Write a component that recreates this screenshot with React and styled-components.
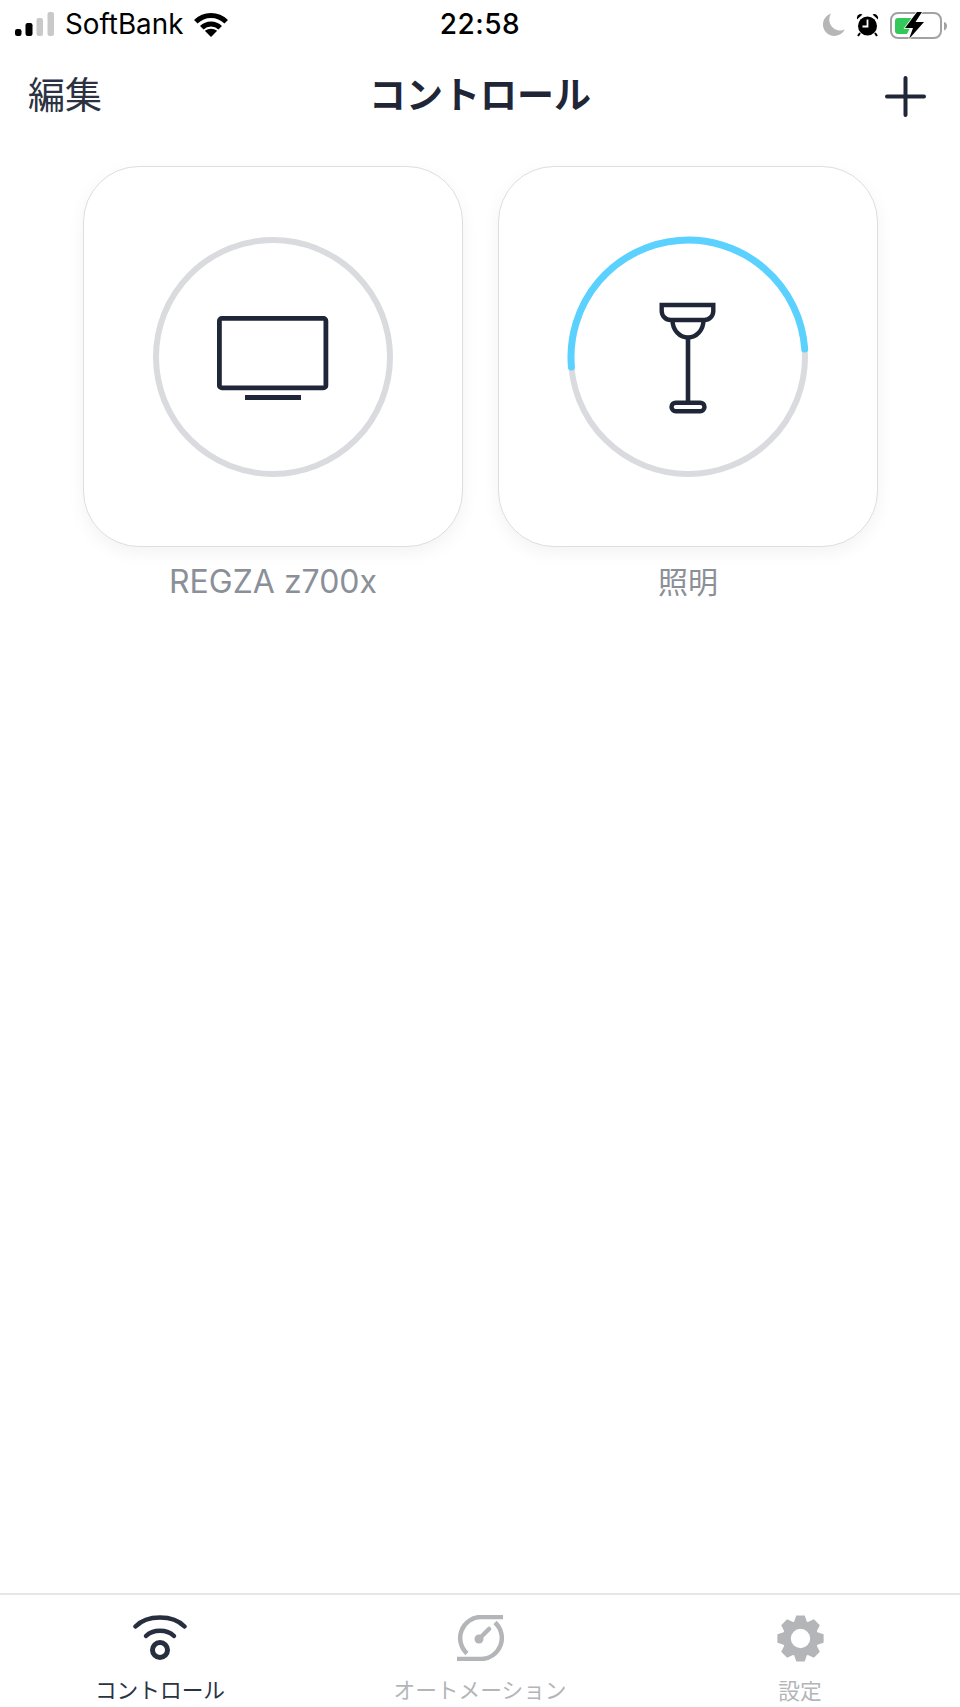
import React from 'react';
import styled, { createGlobalStyle } from 'styled-components';

const GlobalStyle = createGlobalStyle`
html, body {
	margin: 0;
	padding: 0;
	background-color: #fff;
}
* {
	box-sizing: border-box;
}
`;

const SANS = `Inter, "Noto Sans CJK JP", "Noto Sans", sans-serif`;
const INK = '#1f2637';

const Page = styled.div`
display: flex;
flex-flow: column nowrap;
width: 960px;
height: 1707px;
background-color: #fff;
font-family: ${SANS};
color: ${INK};
overflow: hidden;
`;

const StatusBar = styled.div`
display: grid;
grid-template-columns: 1fr auto 1fr;
align-items: center;
flex-shrink: 0;
height: 48px;
padding: 1px 15px 0;
color: #000;
`;

const StatusLeft = styled.div`
display: flex;
align-items: center;
gap: 10px;
`;

const Carrier = styled.span`
font-size: 27.8px;
line-height: 47px;
`;

const Clock = styled.span`
font-size: 28px;
font-weight: 500;
line-height: 47px;
letter-spacing: 0.5px;
`;

const StatusRight = styled.div`
display: flex;
align-items: center;
justify-content: flex-end;
gap: 11px;
margin-right: -3px;
`;

const NavBar = styled.div`
display: grid;
grid-template-columns: 1fr auto 1fr;
align-items: center;
flex-shrink: 0;
height: 90px;
padding: 0 28px;
`;

const EditButton = styled.span`
font-size: 37px;
color: #2b3242;
`;

const Title = styled.h1`
margin: 0;
font-size: 37px;
font-weight: 700;
color: ${INK};
`;

const AddButton = styled.div`
display: flex;
justify-content: flex-end;
padding: 6px 6px 0 0;
`;

const DeviceGrid = styled.div`
display: grid;
grid-template-columns: 380px 380px;
gap: 35px;
flex-grow: 1;
align-content: start;
padding: 28px 83px 0;
`;

const Device = styled.div`
display: flex;
flex-flow: column nowrap;
align-items: center;
`;

const DeviceCard = styled.div`
display: grid;
place-items: center;
width: 380px;
height: 381px;
padding-top: 1px;
background-color: #fff;
border: 1px solid #dedee1;
border-radius: 56px;
box-shadow: 0 6px 18px rgba(0, 0, 0, 0.05);
& > svg {
	grid-area: 1 / 1;
}
`;

const DeviceName = styled.span`
margin-top: 16px;
font-size: ${(props) => props.$size || 30}px;
line-height: 38px;
color: #8b9098;
`;

const TabBar = styled.div`
display: grid;
grid-template-columns: repeat(3, 320px);
flex-shrink: 0;
height: 114px;
border-top: 2px solid #e6e6e8;
`;

const Tab = styled.div`
display: flex;
flex-flow: column nowrap;
align-items: center;
padding-top: 20px;
color: ${(props) => (props.$active ? '#2b3242' : '#b4b5b9')};
`;

const TabLabel = styled.span`
margin-top: 14px;
font-size: 21.7px;
line-height: 30px;
white-space: nowrap;
`;

const SignalIcon = () => (
	<svg width="40" height="26" viewBox="0 0 40 26">
		<rect x="0" y="17" width="6.5" height="7" rx="2.2" fill="#000" />
		<rect x="10.5" y="11" width="7" height="13" rx="2.2" fill="#000" />
		<rect x="21.5" y="6" width="6.5" height="18" rx="2.2" fill="#c9c9c9" />
		<rect x="32.5" y="0" width="6.5" height="24" rx="2.2" fill="#c9c9c9" />
	</svg>
);

const WifiStatusIcon = () => (
	<svg width="36" height="26" viewBox="0 0 36 26" fill="none">
		<path d="M2.8 9.8A21.5 21.5 0 0 1 33.2 9.8" stroke="#000" strokeWidth="5" />
		<path d="M8.8 15.8A13 13 0 0 1 27.2 15.8" stroke="#000" strokeWidth="5" />
		<path d="M18 25L11.8 18.8Q18 14.6 24.2 18.8Z" fill="#000" />
	</svg>
);

const MoonIcon = () => (
	<svg width="22" height="23" viewBox="0 0 22 23">
		<path d="M8 0.5A11.5 11.5 0 1 0 21.8 16.5A11 11 0 0 1 8 0.5Z" fill="#b6b6b6" />
	</svg>
);

const AlarmIcon = () => (
	<svg width="23" height="24" viewBox="0 0 23 24">
		<circle cx="11.5" cy="13" r="9.5" fill="#000" />
		<path d="M1 6.5A4 4 0 0 1 6.5 1.5Z" fill="#000" />
		<path d="M22 6.5A4 4 0 0 0 16.5 1.5Z" fill="#000" />
		<path d="M4 20L2 23M19 20L21 23" stroke="#000" strokeWidth="2" />
		<path d="M11.5 6.5V13.5H6.5" stroke="#fff" strokeWidth="1.8" fill="none" />
	</svg>
);

const BatteryIcon = () => (
	<svg width="58" height="28" viewBox="0 0 58 28">
		<rect x="1" y="2" width="50" height="25" rx="7" fill="none" stroke="#a2a2a2" strokeWidth="2" />
		<path d="M54 11C56 11.5 57 13 57 15S56 18.500 54 19.500Z" fill="#a2a2a2" />
		<path d="M8 7H25L17 23H8A3 3 0 0 1 5 20V10A3 3 0 0 1 8 7Z" fill="#34c759" />
		<path d="M27 1L15 17H23L19 28L34 11H25.500L32 1Z" fill="#000" stroke="#fff" strokeWidth="1.5" paintOrder="stroke" />
	</svg>
);

const PlusIcon = () => (
	<svg width="41" height="41" viewBox="0 0 41 41" fill="none" stroke={INK} strokeWidth="4" strokeLinecap="round">
		<path d="M20.500 2V39M2 20.500H39" />
	</svg>
);

// grey ring, with the blue arc on top when the device is switched on
const Ring = ({ lit }) => (
	<svg width="244" height="244" viewBox="0 0 244 244" fill="none">
		<circle cx="122" cy="122" r="117" stroke="#dadbdf" strokeWidth="6" />
		{lit && <path d="M5.400 132A117 117 0 1 1 238.700 114" stroke="#5ad1ff" strokeWidth="7" strokeLinecap="round" />}
	</svg>
);

const TvIcon = () => (
	<svg width="112" height="90" viewBox="0 -4 112 90" fill="none" stroke={INK}>
		<rect x="2.400" y="2.400" width="106.500" height="69.500" rx="2.500" strokeWidth="4.800" />
		<path d="M28 81.500H84" strokeWidth="4.800" />
	</svg>
);

const LampIcon = () => (
	<svg width="60" height="118" viewBox="0 -2 60 118" fill="none" stroke={INK} strokeWidth="4.400">
		<path d="M3.700 5H55.300V11A9 9 0 0 1 46.300 20H12.700A9 9 0 0 1 3.700 11Z" />
		<path d="M14.500 20C14.500 30 21.500 37.500 30 37.500C38.500 37.500 45.500 30 45.500 20" />
		<path d="M30 37V102" strokeWidth="4.600" />
		<rect x="13.500" y="102.700" width="33" height="8.500" rx="4.200" />
	</svg>
);

const ControlIcon = () => (
	<svg width="54" height="46" viewBox="0 0 54 46" fill="none" stroke="#272e3e" strokeLinecap="round">
		<path d="M2.500 11.500C14 -0.500 40 -0.500 51.500 11.500" strokeWidth="4.500" />
		<path d="M13 21C20 14 34 14 41 21" strokeWidth="4.500" />
		<circle cx="27" cy="35" r="7.500" strokeWidth="5" />
	</svg>
);

const AutomationIcon = () => (
	<svg width="48" height="46" viewBox="0 0 48 46" fill="none" stroke="#b4b5b9">
		<path d="M47 2H25A21 21 0 0 0 11 38.500" strokeWidth="4.500" />
		<path d="M1 44H25A21 21 0 0 0 39 7.500" strokeWidth="4.500" />
		<circle cx="23" cy="24" r="4.500" fill="#b4b5b9" stroke="none" />
		<path d="M23 24L33 14" strokeWidth="4.500" strokeLinecap="round" />
	</svg>
);

// gear outline worked out once, 8 teeth with one pointing straight up
const gearPath = () => {
	const pts = [];
	for (let i = 0; i < 8; i++) {
		const a = (i * Math.PI) / 4 - Math.PI / 2;
		[[-0.36, 18], [-0.18, 23.5], [0.18, 23.5], [0.36, 18]].forEach(([d, r]) => {
			pts.push(`${(24.5 + r * Math.cos(a + d)).toFixed(2)} ${(23.500 + r * Math.sin(a + d)).toFixed(2)}`);
		});
	}
	return `M${pts.join('L')}Z`;
};

const SettingsIcon = () => (
	<svg width="48" height="47" viewBox="0 0 48 47">
		<path
			d={`${gearPath()}M24.500 13.800A9.700 9.700 0 1 0 24.500 33.200A9.700 9.700 0 1 0 24.500 13.800Z`}
			fill="#b4b5b9"
			fillRule="evenodd"
		/>
	</svg>
);

const App = () => {
	return (
		<Page>
			<GlobalStyle />
			<StatusBar>
				<StatusLeft>
					<SignalIcon />
					<Carrier>SoftBank</Carrier>
					<WifiStatusIcon />
				</StatusLeft>
				<Clock>22:58</Clock>
				<StatusRight>
					<MoonIcon />
					<AlarmIcon />
					<BatteryIcon />
				</StatusRight>
			</StatusBar>
			<NavBar>
				<EditButton>編集</EditButton>
				<Title>コントロール</Title>
				<AddButton>
					<PlusIcon />
				</AddButton>
			</NavBar>
			<DeviceGrid>
				<Device>
					<DeviceCard>
						<Ring />
						<TvIcon />
					</DeviceCard>
					<DeviceName $size={32}>REGZA z700x</DeviceName>
				</Device>
				<Device>
					<DeviceCard>
						<Ring lit />
						<LampIcon />
					</DeviceCard>
					<DeviceName>照明</DeviceName>
				</Device>
			</DeviceGrid>
			<TabBar>
				<Tab $active>
					<ControlIcon />
					<TabLabel>コントロール</TabLabel>
				</Tab>
				<Tab>
					<AutomationIcon />
					<TabLabel>オートメーション</TabLabel>
				</Tab>
				<Tab>
					<SettingsIcon />
					<TabLabel>設定</TabLabel>
				</Tab>
			</TabBar>
		</Page>
	);
};

export default App;
